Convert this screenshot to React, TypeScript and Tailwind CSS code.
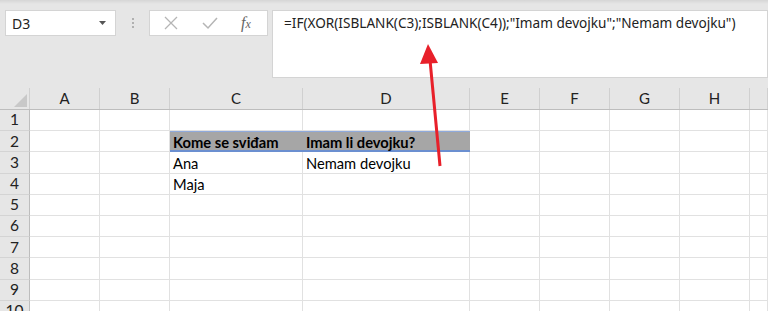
import React from 'react'

const cols = ['A', 'B', 'C', 'D', 'E', 'F', 'G', 'H', '']
const colW = ['w-[70px]', 'w-[70px]', 'w-[133px]', 'w-[167px]', 'w-[70px]', 'w-[70px]', 'w-[70px]', 'w-[70px]', 'flex-1']

const data: Record<number, Record<number, string>> = {
    2: { 2: 'Kome se sviđam', 3: 'Imam li devojku?' },
    3: { 2: 'Ana', 3: 'Nemam devojku' },
    4: { 2: 'Maja' },
}

const Toolbar = () => {
    return (
        <div className="h-[88px] bg-[#e6e6e6] relative flex items-start pt-[10px] pl-[5px]">
            <div className="absolute top-0 left-0 right-0 h-[4px] bg-gradient-to-b from-[#d6d6d6] to-[#e6e6e6]" />
            <div className="w-[111px] h-[26px] bg-white border border-[#d4d4d4] flex items-center pl-[6px] pr-[9px] text-[14px] text-[#222]">
                <span>D3</span>
                <svg className="ml-auto" width="7" height="4" viewBox="0 0 7 4">
                    <path d="M0 0 L7 0 L3.5 4 Z" fill="#555" />
                </svg>
            </div>
            <div className="w-[33px] h-[26px] flex flex-col items-center justify-center gap-[2px]">
                <div className="w-[2px] h-[2px] bg-[#b0b0b0]" />
                <div className="w-[2px] h-[2px] bg-[#b0b0b0]" />
                <div className="w-[2px] h-[2px] bg-[#b0b0b0]" />
            </div>
            <div className="w-[119px] h-[26px] bg-white border border-[#d4d4d4] flex items-center">
                <svg className="ml-[14px]" width="14" height="14" viewBox="0 0 14 14">
                    <path d="M1 1 L13 13 M13 1 L1 13" stroke="#b5b5b5" strokeWidth="1.3" />
                </svg>
                <svg className="ml-[24px]" width="16" height="14" viewBox="0 0 16 14">
                    <path d="M1 7 L6 12 L15 2" stroke="#b5b5b5" strokeWidth="1.5" fill="none" />
                </svg>
                <span className="ml-[23px] text-[16px] italic text-[#666] font-['Liberation_Serif',serif]">
                    f<span className="text-[12px]">x</span>
                </span>
            </div>
            <div className="ml-[4px] flex-1 h-[68px] bg-white border border-[#d4d4d4] pl-[11px] pt-[2px] text-[13.6px] text-[#222]">
                =IF(XOR(ISBLANK(C3);ISBLANK(C4));"Imam devojku";"Nemam devojku")
            </div>
        </div>
    )
}

const Sheet = () => {
    return (
        <div className="bg-white font-['Lato',sans-serif] text-[14.7px]">
            <div className="flex h-[22px] bg-[#e6e6e6] border-b border-[#bdbdbd]">
                <div className="w-[30px] border-r border-[#d0d0d0] relative">
                    <svg className="absolute right-[2px] bottom-[2px]" width="13" height="13" viewBox="0 0 13 13">
                        <path d="M13 0 L13 13 L0 13 Z" fill="#c8c8c8" />
                    </svg>
                </div>
                {cols.map((c, i) => (
                    <div
                        key={i}
                        className={`${colW[i]} border-r border-[#d0d0d0] flex items-center justify-center text-[#222] text-[15px]`}
                    >
                        {c}
                    </div>
                ))}
            </div>
            {Array.from({ length: 10 }, (_, r) => r + 1).map((row) => (
                <div key={row} className="flex h-[21.2px]">
                    <div className="w-[30px] bg-[#e6e6e6] border-r border-[#bdbdbd] border-b border-b-[#d4d4d4] flex items-center justify-center text-[15.5px] text-[#222]">
                        {row}
                    </div>
                    {cols.map((_, i) => {
                        const val = data[row]?.[i]
                        const head = row === 2 && (i === 2 || i === 3)
                        return (
                            <div
                                key={i}
                                className={
                                    head
                                        ? `${colW[i]} bg-[#a6a6a6] border-t border-t-[#8faadc] border-b-2 border-b-[#6b8fd0] flex items-center pl-[3px] pt-[1px] font-bold text-black`
                                        : `${colW[i]} border-r border-b border-[#e1e1e1] flex items-center pl-[3px] pt-[1px] text-black`
                                }
                            >
                                {val}
                            </div>
                        )
                    })}
                </div>
            ))}
        </div>
    )
}

export default function App() {
    return (
        <div className="w-[768px] h-[311px] overflow-hidden relative font-['Noto_Sans',sans-serif]">
            <Toolbar />
            <Sheet />
            <svg className="absolute left-0 top-0 pointer-events-none" width="768" height="311">
                <line x1="440" y1="166" x2="430" y2="60" stroke="#e8202a" strokeWidth="3" />
                <path d="M428 44 L420 64 L438 63 Z" fill="#e8202a" />
            </svg>
        </div>
    )
}
